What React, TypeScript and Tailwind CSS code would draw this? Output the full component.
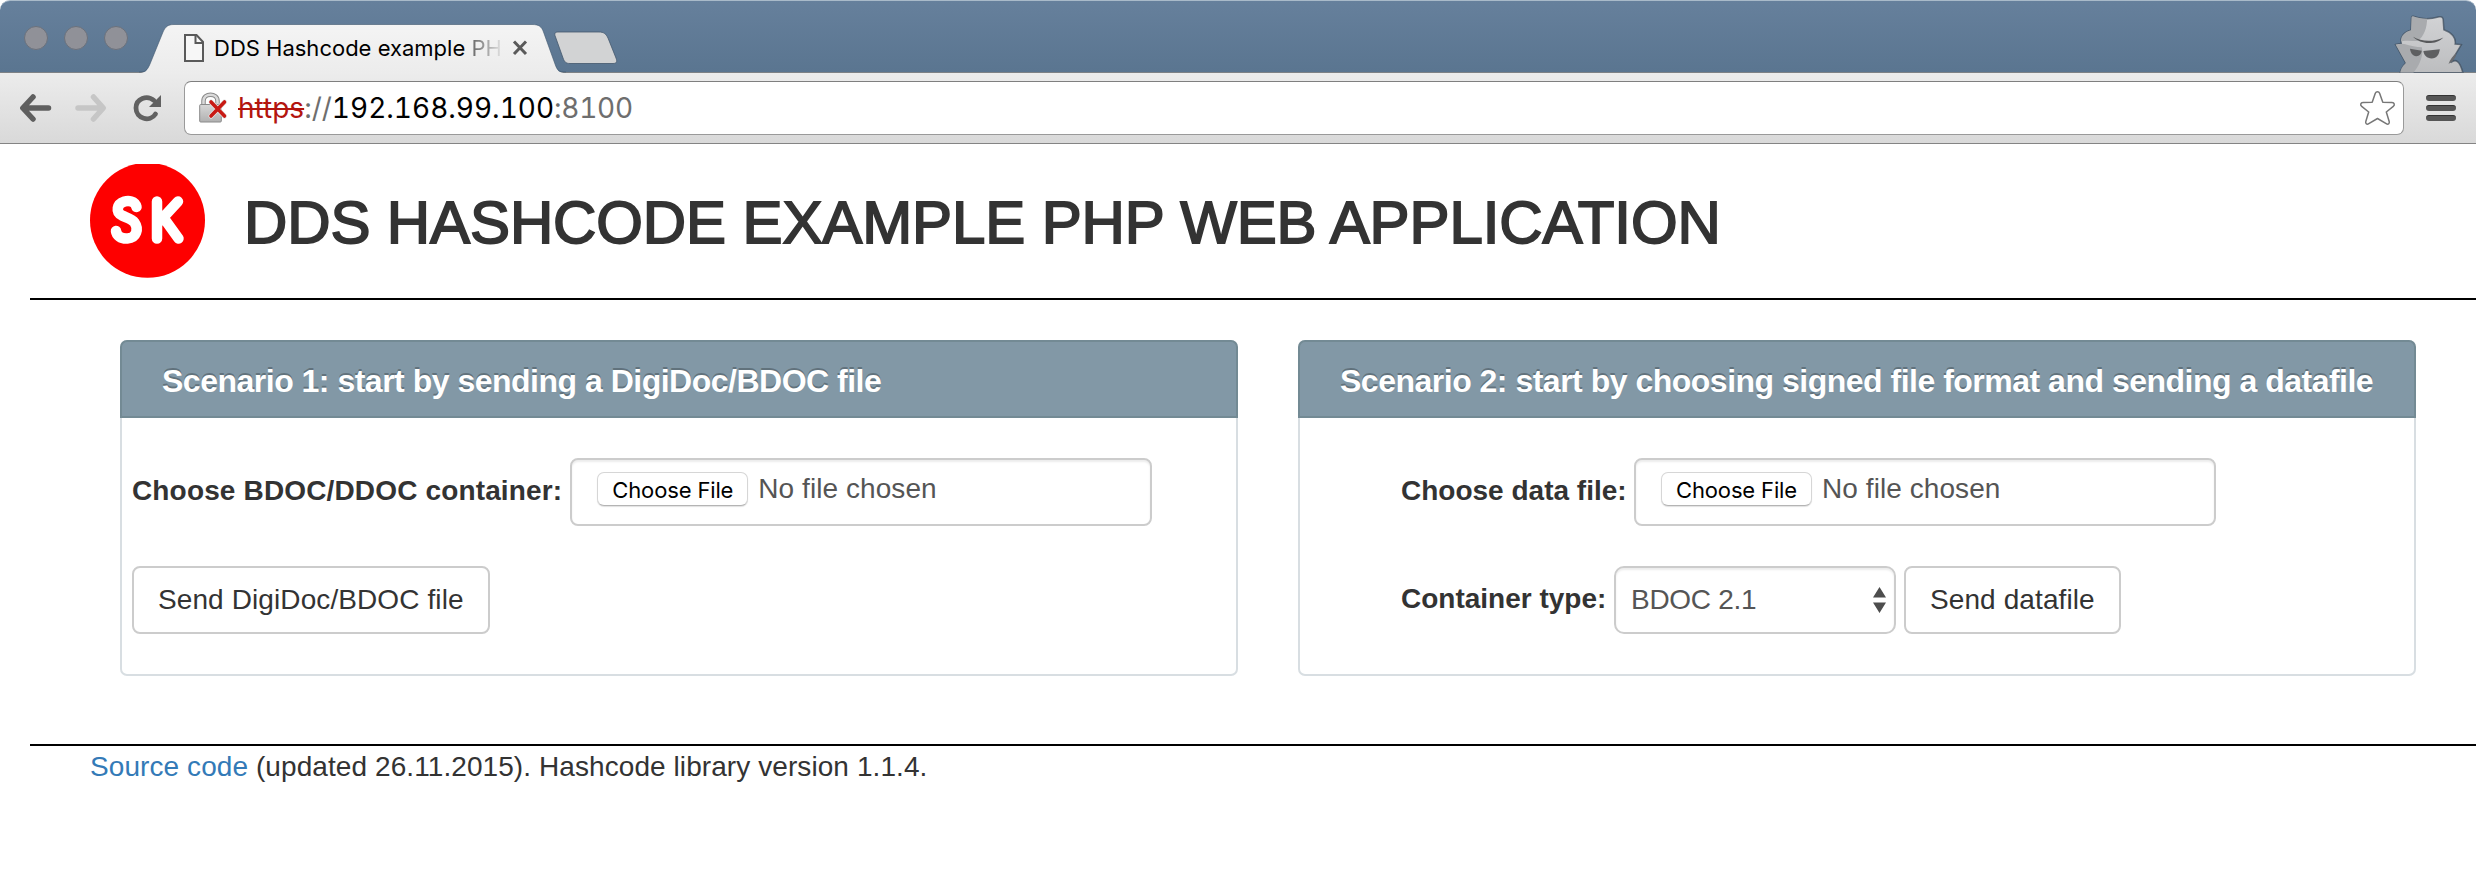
import type { ReactNode } from "react";

function TabShape() {
  return (
    <svg className="absolute inset-0" width="430" height="49" viewBox="0 0 430 49">
      <defs>
        <linearGradient id="tab" x1="0" y1="0" x2="0" y2="1">
          <stop offset="0" stopColor="#f4f4f4" />
          <stop offset="1" stopColor="#ececec" />
        </linearGradient>
      </defs>
      <path
        d="M0 49 C6 49 8 47 11 40 L24 8 C26.500 2.500 29 0.500 35 0.500 H393 C400 0.500 402.500 2.500 404.500 8 L416 40 C418.500 47 420 49 427 49 Z"
        fill="url(#tab)"
      />
      <path
        d="M0 48 C6 48 8 47 11 40 L24 8 C26.500 2.500 29 0.500 35 0.500 H393 C400 0.500 402.500 2.500 404.500 8 L416 40 C418.500 47 420 48 427 48"
        fill="none"
        stroke="#3f566e"
        strokeOpacity="0.6"
      />
    </svg>
  );
}

function Incognito() {
  return (
    <svg className="mr-[10px] overflow-hidden" width="74" height="62" viewBox="0 0 72 60">
      <defs>
        <linearGradient id="spy" x1="0" y1="0" x2="0" y2="1">
          <stop offset="0" stopColor="#d2d3d5" />
          <stop offset="1" stopColor="#bcbdbf" />
        </linearGradient>
        <clipPath id="spyClip">
          <path d="M20.500 5 C28 8 37 8 46 5.500 C48 5 49.500 6 49.800 8 L50.500 18 C58 20.500 62.500 26 61.500 32 L67.500 32.500 L57 50 C62 46 66 48 69 60 H8 C9 55 11 53 13.500 50.500 L3.500 32.500 L9 31.500 C7.500 25 12 20 18.500 18.500 L19 7 C19 5.500 19.500 4.800 20.500 5 Z" />
        </clipPath>
      </defs>
      <path
        d="M20.500 5 C28 8 37 8 46 5.500 C48 5 49.500 6 49.800 8 L50.500 18 C58 20.500 62.500 26 61.500 32 L67.500 32.500 L57 50 C62 46 66 48 69 60 H8 C9 55 11 53 13.500 50.500 L3.500 32.500 L9 31.500 C7.500 25 12 20 18.500 18.500 L19 7 C19 5.500 19.500 4.800 20.500 5 Z"
        fill="url(#spy)"
        stroke="#3c4a5a"
        strokeOpacity="0.7"
        strokeWidth="1.500"
      />
      <g clipPath="url(#spyClip)">
        <path d="M17 2 H34 C35 14 32 24 25 29 C18 29 12 28 7 30 C8 20 17 18 17 18 Z" fill="#a9abae" />
        <path d="M0 32 L12 32 C18 34 24 35 29 35 C31 43 27 53 20 61 H0 Z" fill="#a9abae" />
      </g>
      <path d="M20.500 25 C29 30 41 30 50 25.500 C43 33 28 33 20.500 25 Z" fill="#58595b" />
      <path d="M17.500 36.500 L29 38.500 C28.500 42 26.500 44 23.500 43.800 C20 43.500 18 40.500 17.500 36.500 Z" fill="#5e5f61" />
      <path d="M30.500 38.800 L46.500 37 C46 42 43.500 46 38.500 46 C34 46 31 43 30.500 38.800 Z" fill="#5e5f61" />
      <path d="M55 51.500 C56.500 47 59 44 62.500 41 C62 45 60 48.500 55 51.500 Z" fill="#6a6b6e" />
    </svg>
  );
}

function TitleBar() {
  return (
    <div className="flex h-[73px] items-end justify-between rounded-t-[10px] border-t border-[#a9bac9] bg-linear-to-b from-[#66809c] to-[#5a7590] shadow-[inset_0_-1px_0_#7e8286]">
      <div className="flex items-end">
        <div className="flex h-[71px] w-[139px] items-center gap-4 pl-6">
          {[0, 1, 2].map((i) => (
            <span key={i} className="size-6 rounded-full border border-[#6b717c] bg-[#909198]" />
          ))}
        </div>
        <div className="relative z-10 h-[49px] w-[430px]">
          <TabShape />
          <div className="relative flex h-full items-center pl-[45px]">
            <svg width="20" height="28" viewBox="0 0 20 28" className="mb-px shrink-0">
              <path d="M1 1 H12.500 L19 8 V27 H1 Z" fill="#f7f7f7" stroke="#5a5a5a" strokeWidth="2" />
              <path d="M11.500 1.500 V9 H19" fill="none" stroke="#5a5a5a" strokeWidth="2" />
            </svg>
            <div className="ml-[10px] mb-px w-[290px] whitespace-nowrap font-[Inter,sans-serif] text-[22px] leading-[30px] text-black">
              DDS Hashcode example{" "}
              <span className="bg-linear-to-r from-[#666] to-[#e4e4e4] bg-clip-text text-transparent">PH</span>
            </div>
            <svg width="16" height="16" viewBox="0 0 16 16" className="mb-px ml-[8px] shrink-0">
              <path d="M2 1.500 L14 14 M14 1.500 L2 14" stroke="#5a5a5a" strokeWidth="3" />
            </svg>
          </div>
        </div>
        <svg width="66" height="34" viewBox="0 0 66 34" className="mb-[8px] -ml-[16px]">
          <path
            d="M5 1 H46 C51 1 53 3 55 7 L63 27 C64.500 31 63.500 32.500 60 32.500 H17 C13 32.500 11.500 31 10 27 L2.500 6 C1 2.500 2 1 5 1 Z"
            fill="#d2d3d4"
            stroke="#44586d"
            strokeOpacity="0.8"
          />
        </svg>
      </div>
      <Incognito />
    </div>
  );
}

function Toolbar() {
  return (
    <div className="flex h-[71px] items-center border-b border-[#848484] bg-linear-to-b from-[#ececec] to-[#d9d9d9] pl-5 pr-5">
      <svg width="148" height="30" viewBox="0 0 148 30" className="shrink-0" fill="none" strokeLinecap="round">
        <path d="M3.500 15 H28.500 M13 4 L2.800 15 L13 26" stroke="#5f5f5f" strokeWidth="5.500" strokeLinejoin="round" />
        <path d="M58 15 H83 M73.500 4 L83.300 15 L73.500 26" stroke="#c6c6c6" strokeWidth="5.500" strokeLinejoin="round" />
        <path d="M134 7.500 C127 1.500 116 5.500 116 15 C116 26 130 29.500 135.500 21" stroke="#616161" strokeWidth="4.800" />
        <path d="M141 2 V14 H129 Z" fill="#616161" />
      </svg>
      <div className="ml-4 flex h-[54px] flex-1 items-center rounded-[7px] border border-[#9a9a9a] border-t-[#7f7f7f] bg-white pl-[14px] pr-[7px]">
        <svg width="30" height="32" viewBox="0 0 30 32" className="shrink-0">
          <defs>
            <linearGradient id="lock" x1="0" y1="0" x2="0" y2="1">
              <stop offset="0" stopColor="#d8d8d8" />
              <stop offset="1" stopColor="#b0b0b0" />
            </linearGradient>
          </defs>
          <path d="M4.500 13 V9 C4.500 0.500 18.500 0.500 18.500 9 V13" fill="none" stroke="#8a8a8a" strokeWidth="4.500" />
          <path d="M4.500 13 V9 C4.500 0.500 18.500 0.500 18.500 9 V13" fill="none" stroke="#dadada" strokeWidth="2.500" />
          <rect x="0.700" y="12.500" width="21.600" height="17.500" rx="1" fill="url(#lock)" stroke="#8a8a8a" />
          <path d="M12 10 L25.500 24 M25.500 10 L12 24" stroke="#e8e8e8" strokeWidth="5" strokeLinecap="round" />
          <path d="M12 10 L25.500 24 M25.500 10 L12 24" stroke="#c81a14" strokeWidth="3.600" strokeLinecap="round" />
        </svg>
        <div className="ml-[9px] flex-1 whitespace-pre font-[Inter,sans-serif] text-[28px] leading-[40px] tabular-nums text-black">
          <span className="text-[#b3150f] line-through decoration-2">https</span>
          <span className="text-[#6e6e6e]">://</span>
          <span>192.168.99.100</span>
          <span className="text-[#6e6e6e] tracking-[-0.3px]">:8100</span>
        </div>
        <svg width="37" height="36" viewBox="0 0 37 36" className="shrink-0">
          <path
            d="M16.300 3.300 C17.200 1.200 19.800 1.200 20.600 3.300 L23.800 12.300 L33 12.600 C35.500 12.700 36 15 34.300 16.400 L27.300 22 L30.200 31.500 C30.800 33.700 29 34.800 27.200 33.700 L18.500 28.500 L9.800 33.700 C8 34.800 6.200 33.700 6.800 31.500 L9.700 22 L2.700 16.400 C1 15 1.500 12.700 4 12.600 L13.200 12.300 Z"
            fill="#fff"
            stroke="#777"
            strokeWidth="1.500"
            strokeLinejoin="round"
          />
        </svg>
      </div>
      <div className="ml-[22px] flex w-[30px] flex-col gap-1">
        {[0, 1, 2].map((i) => (
          <span key={i} className="h-[6px] rounded-full border-t border-[#333] bg-[#565656]" />
        ))}
      </div>
    </div>
  );
}

function Panel({ title, children }: { title: string; children: ReactNode }) {
  return (
    <section className="flex h-[336px] w-[1118px] flex-col rounded-[7px] border-2 border-[#d8dee2]">
      <h3 className="-mx-[2px] -mt-[2px] flex h-[78px] shrink-0 items-center whitespace-nowrap rounded-t-[7px] border-2 border-[#738a94] bg-[#8298a6] pl-[40px] pt-[4px] text-[32px] leading-[36px] font-bold tracking-[-0.5px] text-white [text-shadow:0_-2px_0_rgba(0,0,0,0.25)]">
        {title}
      </h3>
      {children}
    </section>
  );
}

function FileInput() {
  return (
    <div className="flex h-[68px] w-[582px] items-center rounded-[8px] border-2 border-[#ccc] bg-white pb-[6px] pl-[25px] shadow-[inset_0_2px_2px_rgba(0,0,0,0.075)]">
      <span className="flex h-[34px] w-[151px] items-center justify-center rounded-[7px] border border-[#d6d6d6] border-b-[#b4b4b4] bg-white pt-[2px] font-[Inter,sans-serif] text-[22px] leading-[28px] tracking-[-0.15px] text-black shadow-[0_1px_1px_rgba(0,0,0,0.12)]">
        Choose File
      </span>
      <span className="ml-[10px] pb-[1px] text-[28px] leading-[32px] tracking-[0.07px] text-[#555]">No file chosen</span>
    </div>
  );
}

function Button({ children }: { children: ReactNode }) {
  return (
    <button className="flex h-[68px] items-center whitespace-nowrap rounded-[8px] border-2 border-[#ccc] bg-white px-[24px] text-[28px] leading-[40px] tracking-[0.1px] text-[#333]">
      {children}
    </button>
  );
}

export default function App() {
  return (
    <div className="h-[884px] w-[2476px] overflow-hidden bg-white font-['Liberation_Sans',Arial,sans-serif] text-[28px] leading-[40px] text-[#333]">
      <TitleBar />
      <Toolbar />

      <header className="flex h-[154px] items-start pl-[90px] pt-[20px]">
        <svg width="115" height="114" viewBox="0 0 115 114">
          <circle cx="57.500" cy="56.300" r="57.500" fill="#fe0000" />
          <g fill="none" stroke="#fff" strokeWidth="10.500" strokeLinecap="round" strokeLinejoin="round">
            <path d="M46.500 43 C45 36.500 38 36.500 34.500 37.500 C26.500 40 25.500 48 32 51.500 C36 53.500 42 55 44.500 58.500 C49 65 46.500 74 37.500 74.500 C30.500 75 26.500 71 26 67" />
            <path d="M67 37.500 V74.500 M88 37.500 L70 57 M73 53 L88.500 74.500" />
          </g>
        </svg>
        <h1 className="ml-[39px] mt-[20px] whitespace-nowrap text-[60px] leading-[78px] tracking-[-0.12px] [-webkit-text-stroke:1.8px_#333]">
          DDS HASHCODE EXAMPLE PHP WEB APPLICATION
        </h1>
      </header>
      <hr className="ml-[30px] border-t-2 border-black" />

      <main className="mt-[40px] flex gap-[60px] pl-[120px]">
        <Panel title="Scenario 1: start by sending a DigiDoc/BDOC file">
          <div className="flex flex-col items-start gap-[40px] pl-[10px] pt-[40px]">
            <div className="flex items-center gap-[8px]">
              <label className="whitespace-nowrap pb-[3px] font-bold tracking-[0.15px]">Choose BDOC/DDOC container:</label>
              <FileInput />
            </div>
            <Button>Send DigiDoc/BDOC file</Button>
          </div>
        </Panel>
        <Panel title="Scenario 2: start by choosing signed file format and sending a datafile">
          <div className="flex flex-col items-start gap-[40px] pl-[101px] pt-[40px]">
            <div className="flex items-center">
              <label className="w-[233px] whitespace-nowrap pb-[3px] font-bold">Choose data file:</label>
              <FileInput />
            </div>
            <div className="flex items-center">
              <label className="w-[213px] whitespace-nowrap pb-[3px] font-bold">Container type:</label>
              <div className="flex h-[68px] w-[282px] items-center justify-between rounded-[10px] border-2 border-[#ccc] bg-white pl-[15px] pr-[8px] tracking-[-0.3px] text-[#555] shadow-[inset_0_2px_2px_rgba(0,0,0,0.075)]">
                BDOC 2.1
                <svg width="13" height="26" viewBox="0 0 13 26" fill="#4d4d4d">
                  <path d="M0 10.500 L6.500 0 L13 10.500 Z M0 15.500 H13 L6.500 26 Z" />
                </svg>
              </div>
              <div className="ml-[8px]">
                <Button>Send datafile</Button>
              </div>
            </div>
          </div>
        </Panel>
      </main>

      <hr className="ml-[30px] mt-[68px] border-t-2 border-black" />
      <footer className="whitespace-nowrap pl-[90px] pt-px tracking-[0.08px]">
        <a className="text-[#337ab7]">Source code</a> (updated 26.11.2015). Hashcode library version 1.1.4.
      </footer>
    </div>
  );
}
